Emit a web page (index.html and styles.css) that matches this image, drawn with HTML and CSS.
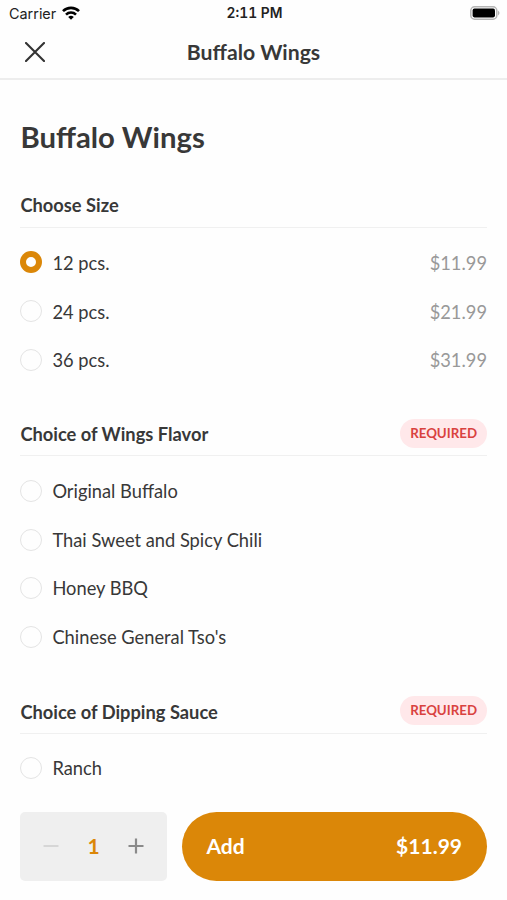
FILE: index.html
```html
<!DOCTYPE html>
<html lang="en">
<head>
<meta charset="utf-8">
<title>Buffalo Wings</title>
<link rel="stylesheet" href="styles.css">
</head>
<body>
<header class="header">
  <div class="status">
    <div class="carrier"><span>Carrier</span>
      <svg class="wifi" viewBox="0 0 18 14" width="18" height="14"><g fill="none" stroke="#000" stroke-width="2.6"><path d="M1 5.2a11.3 11.3 0 0 1 16 0"/><path d="M4 8.6a7.1 7.1 0 0 1 10 0"/></g><path d="M9 13.8 6.2 11a4 4 0 0 1 5.6 0z"/></svg>
    </div>
    <div class="time">2:11 PM</div>
    <svg class="battery" viewBox="0 0 30 14" width="30" height="14"><rect x=".8" y=".8" width="26" height="12.4" rx="3.8" fill="#fff" stroke="#b5b5b5" stroke-width="1.5"/><rect x="2.6" y="2.6" width="22.4" height="8.8" rx="1.8"/><path d="M28 4.5q3 2.5 0 5z" fill="#b5b5b5"/></svg>
  </div>
  <div class="nav">
    <svg class="close" viewBox="0 0 20 20" width="20" height="20"><path d="M1 1l18 18M19 1L1 19" stroke="#333" stroke-width="2.1" stroke-linecap="round"/></svg>
    <div class="nav-title">Buffalo Wings</div>
  </div>
</header>
<main class="content">
  <h1>Buffalo Wings</h1>
  <section class="size">
    <div class="section-head"><h2>Choose Size</h2></div>
    <div class="option"><i class="radio selected"></i><span class="label">12 pcs.</span><span class="price">$11.99</span></div>
    <div class="option"><i class="radio"></i><span class="label">24 pcs.</span><span class="price">$21.99</span></div>
    <div class="option"><i class="radio"></i><span class="label">36 pcs.</span><span class="price">$31.99</span></div>
  </section>
  <section class="group">
    <div class="section-head"><h2>Choice of Wings Flavor</h2><span class="badge">REQUIRED</span></div>
    <div class="option"><i class="radio"></i><span class="label">Original Buffalo</span></div>
    <div class="option"><i class="radio"></i><span class="label">Thai Sweet and Spicy Chili</span></div>
    <div class="option"><i class="radio"></i><span class="label">Honey BBQ</span></div>
    <div class="option"><i class="radio"></i><span class="label">Chinese General Tso's</span></div>
  </section>
  <section class="group">
    <div class="section-head"><h2>Choice of Dipping Sauce</h2><span class="badge">REQUIRED</span></div>
    <div class="option"><i class="radio"></i><span class="label">Ranch</span></div>
  </section>
</main>
<footer class="footer">
  <div class="stepper">
    <svg viewBox="0 0 16 16" width="16" height="16"><path d="M.5 8h15" stroke="#d6d6d6" stroke-width="2"/></svg>
    <span class="count">1</span>
    <svg viewBox="0 0 16 16" width="16" height="16"><path d="M.5 8h15M8 .5v15" stroke="#8a8a8a" stroke-width="2.2"/></svg>
  </div>
  <div class="add"><span>Add</span><span>$11.99</span></div>
</footer>
</body>
</html>
```
FILE: styles.css
```css
* { box-sizing: border-box; }
body { margin: 0; height: 900px; display: flex; flex-direction: column; overflow: hidden; background: #fefefe; color: #383838; font-family: Lato, sans-serif; }
.header { flex: none; height: 80px; border-bottom: 2px solid #ededed; }
.status { height: 27px; padding: 0 7px 0 9px; display: grid; grid-template-columns: 1fr auto 1fr; align-items: center; font: 14.4px/27px Inter, sans-serif; color: #222; }
.carrier { display: flex; align-items: center; gap: 6px; }
.wifi { margin-top: -2px; }
.time { font-weight: 600; font-size: 13.8px; font-variant-numeric: tabular-nums; }
.battery { justify-self: end; margin-top: -1px; }
.nav { height: 50px; padding: 0 25px; display: grid; grid-template-columns: 20px 1fr 20px; align-items: center; }
.nav-title { line-height: 26px; padding-bottom: 1px; text-align: center; font-size: 21.2px; font-weight: 700; }
.content { flex: 1; min-height: 0; padding: 0 20px 0 20.4px; overflow: hidden; }
h1 { margin: 37px 0 0; font-size: 29.3px; line-height: 40px; font-weight: 700; }
h2 { margin: 0; font-size: 18.3px; line-height: 24px; font-weight: 700; }
.size { margin-top: 27px; }
.size h2 { padding-bottom: 1px; }
.group { margin-top: 28px; }
.group h2 { padding-top: 1px; }
.section-head { display: flex; justify-content: space-between; align-items: center; height: 44px; margin-bottom: 10px; border-bottom: 1px solid #f0f0f0; }
.option { height: 48.8px; display: flex; align-items: center; font-size: 18.3px; line-height: 24px; }
.radio { width: 22px; height: 22px; margin-right: 10px; border: 1.5px solid #e4e4e4; border-radius: 50%; }
.selected { border: 6px solid #db8708; }
.size .label, .price { padding-top: 1px; }
.price { margin-left: auto; color: #999; }
.badge { height: 29px; padding: 0 10px; border-radius: 15px; background: #ffe8ea; color: #d9423f; font-size: 13.3px; line-height: 29px; font-weight: 700; }
.group .badge { margin-top: -1px; }
.footer { flex: none; height: 107px; padding: 19px 20px 19px 20.4px; display: flex; gap: 15px; }
.stepper { width: 146.5px; height: 68.5px; padding: 0 22.5px; border-radius: 5px; background: #efefef; display: flex; align-items: center; justify-content: space-between; }
.count { padding-bottom: 1px; color: #db8708; font-size: 21px; font-weight: 700; }
.add { flex: 1; height: 68.5px; padding: 0 25px 1px 24.5px; border-radius: 35px; background: #db8708; color: #fff; display: flex; align-items: center; justify-content: space-between; font-size: 21px; font-weight: 700; }
```
